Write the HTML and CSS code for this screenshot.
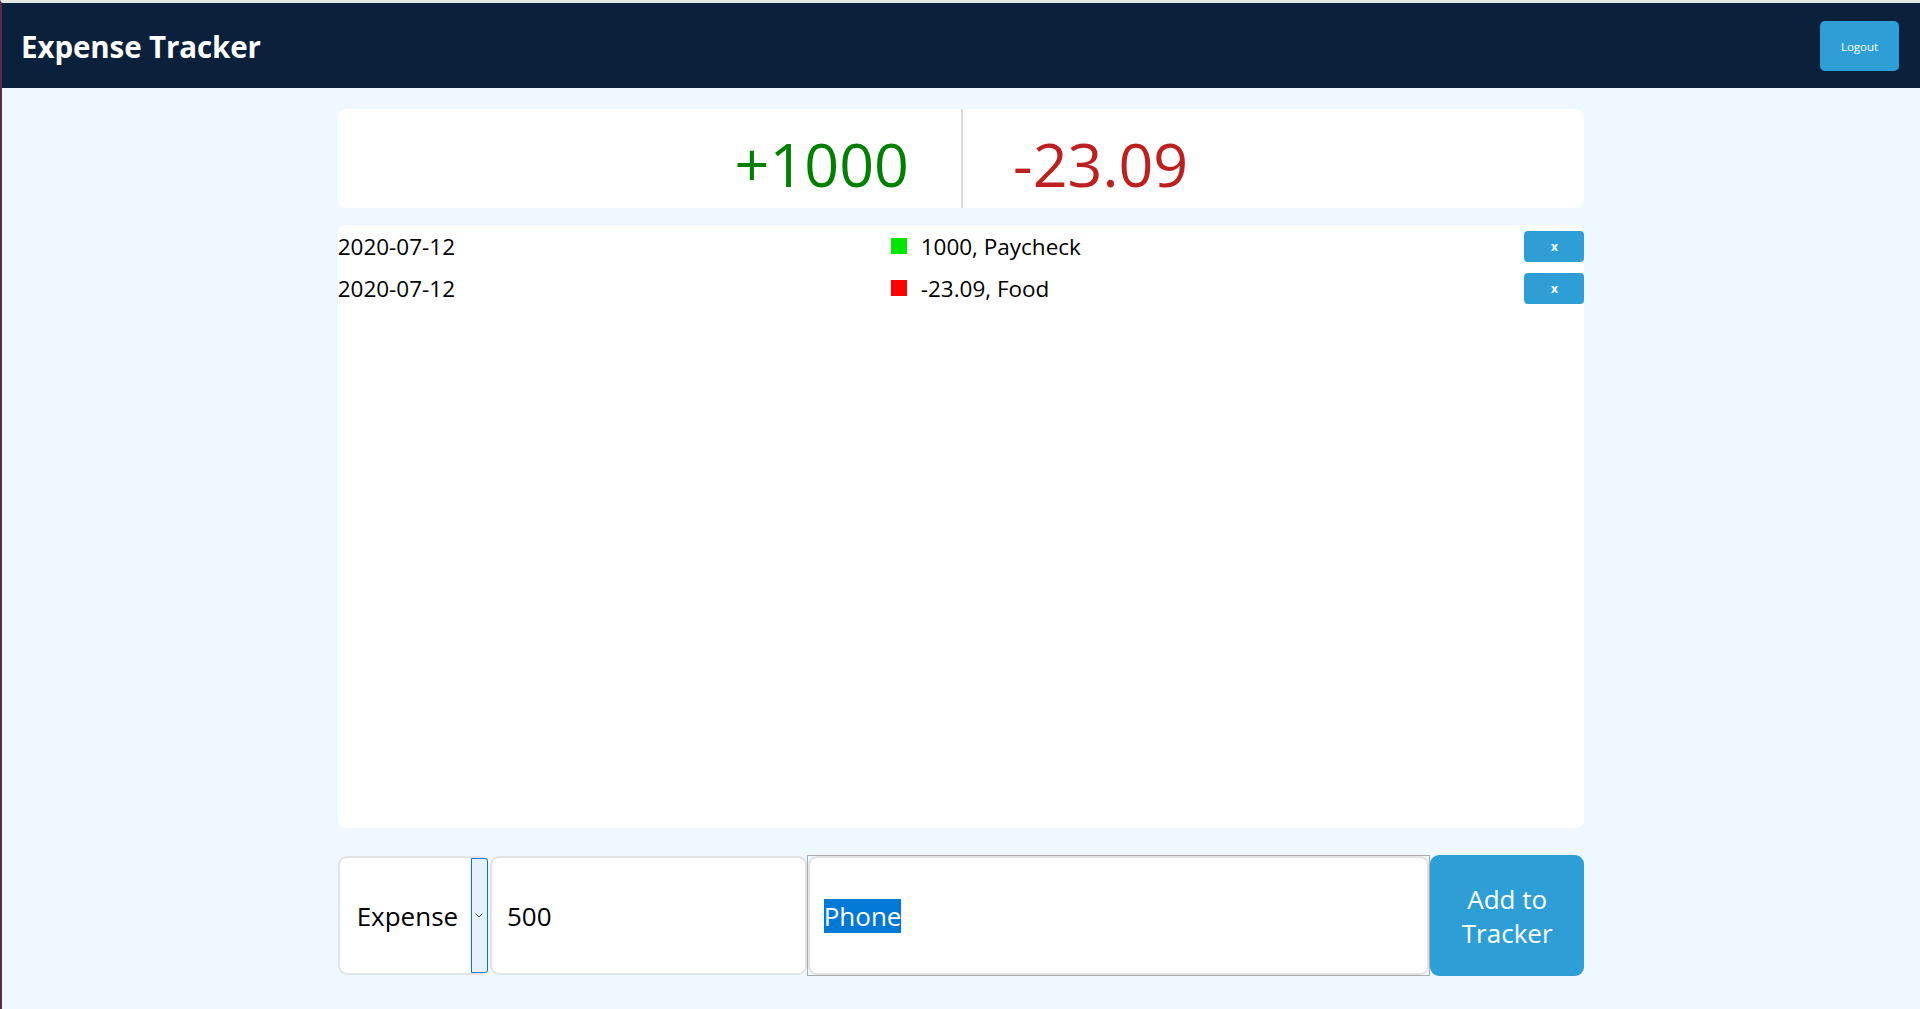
FILE: index.html
```html
<!DOCTYPE html>
<html lang="en">
<head>
<meta charset="utf-8">
<title>Expense Tracker</title>
<link rel="stylesheet" href="styles.css">
</head>
<body>
<header class="topbar">
  <h1 class="brand">Expense Tracker</h1>
  <button class="logout">Logout</button>
</header>
<main class="main">
  <section class="summary">
    <div class="sum-half sum-income">+1000</div>
    <div class="sum-divider"></div>
    <div class="sum-half sum-expense">-23.09</div>
  </section>
  <section class="list">
    <div class="row">
      <span class="date">2020-07-12</span>
      <span class="item"><span class="swatch swatch-in"></span>1000, Paycheck</span>
      <span class="cell-btn"><button class="del">x</button></span>
    </div>
    <div class="row">
      <span class="date">2020-07-12</span>
      <span class="item"><span class="swatch swatch-out"></span>-23.09, Food</span>
      <span class="cell-btn"><button class="del">x</button></span>
    </div>
  </section>
  <form class="entry">
    <div class="select-box">
      <span class="select-text">Expense</span>
      <span class="select-arrow"><svg width="8" height="5" viewBox="0 0 8 5"><path d="M0.5 0.5 L4 4 L7.5 0.5" fill="none" stroke="#444" stroke-width="1"/></svg></span>
    </div>
    <input class="field amount" type="text" value="500">
    <div class="desc-outer">
      <div class="field desc"><span class="sel">Phone</span></div>
    </div>
    <button class="add" type="button">Add to<br>Tracker</button>
  </form>
</main>
</body>
</html>
```

FILE: styles.css
```css
* { box-sizing: border-box; }
html, body { margin: 0; padding: 0; }
body {
  background: #f0f8ff;
  border-left: 2px solid #5b2a4c;
  border-top: 3px solid #e6e6e6;
  min-height: 1009px;
  font-family: "Open Sans", "Noto Sans", sans-serif;
  color: #000;
}
.topbar {
  height: 85px;
  background: #0b203a;
  display: flex;
  align-items: center;
  justify-content: space-between;
  padding: 0 21px 0 19px;
}
.brand {
  margin: 2px 0 0 0;
  color: #fff;
  font-size: 29.5px;
  font-weight: 700;
  letter-spacing: -0.1px;
}
.logout {
  width: 79px;
  height: 50px;
  background: #2d9fd6;
  color: #fff;
  border: none;
  border-radius: 5px;
  font-family: "Open Sans", sans-serif;
  font-size: 11.5px;
  margin-top: 1px;
}
.main {
  width: 65%;
  margin: 0 auto;
  padding-top: 21px;
  display: flex;
  flex-direction: column;
}
.summary {
  height: 99px;
  background: #fff;
  border-radius: 8px;
  display: flex;
  align-items: stretch;
}
.sum-half {
  flex: 1;
  display: flex;
  align-items: center;
  font-size: 61px;
  font-weight: 400;
  padding-top: 10px;
}
.sum-income { justify-content: flex-end; padding-right: 50px; color: #008000; }
.sum-expense { justify-content: flex-start; padding-left: 52px; color: #be1f1f; }
.sum-divider { width: 2px; background: #d8d8d8; margin-left: 2px; margin-right: -2px; }
.list {
  margin-top: 17px;
  height: 603px;
  background: #fff;
  border-radius: 8px;
}
.row {
  height: 42px;
  display: grid;
  grid-template-columns: 553px 1fr 60px;
  align-items: center;
  font-size: 22.5px;
}
.item { display: flex; align-items: center; }
.swatch { width: 16px; height: 16px; margin-right: 14px; }
.swatch-in { background: #00e600; }
.swatch-out { background: #ff0000; }
.cell-btn { display: flex; }
.del {
  width: 60px;
  height: 31px;
  background: #2d9fd6;
  color: #fff;
  border: none;
  border-radius: 4px;
  font-family: "Open Sans", sans-serif;
  font-weight: 700;
  font-size: 12px;
  padding: 0;
}
.entry {
  margin-top: 27px;
  height: 121px;
  display: grid;
  grid-template-columns: minmax(0, 152fr) minmax(0, 316fr) minmax(0, 622fr) minmax(0, 154fr);
}
.select-box {
  margin-right: 2px;
  background: #fff;
  border: 2px solid #e3e3e3;
  border-radius: 9px;
  display: flex;
  align-items: stretch;
  margin-top: 1px;
  margin-bottom: 1px;
}
.select-text {
  flex: 1;
  display: flex;
  align-items: center;
  padding-left: 17px;
  font-size: 26px;
}
.select-arrow {
  width: 17px;
  margin: 0 -2px 0 0;
  border: 1px solid #0078d7;
  border-radius: 0 3px 3px 0;
  background: #e5f1fb;
  display: flex;
  align-items: center;
  justify-content: center;
}
.field {
  background: #fff;
  border: 2px solid #e3e3e3;
  border-radius: 9px;
  font-family: "Open Sans", sans-serif;
  font-size: 26px;
  color: #000;
}
.amount {
  width: 100%;
  min-width: 0;
  padding: 0 0 0 15px;
  margin: 1px 0;
  outline: none;
}
.desc-outer {
  border: 1px solid #ababab;
  display: flex;
}
.desc {
  flex: 1;
  display: flex;
  align-items: center;
  padding-left: 14px;
}
.sel {
  background: #0078d7;
  color: #fff;
  line-height: 34px;
}
.add {
  background: #2d9fd6;
  color: #fff;
  border: none;
  border-radius: 9px;
  font-family: "Open Sans", sans-serif;
  font-size: 26px;
  line-height: 34px;
  padding: 0;
}
```
